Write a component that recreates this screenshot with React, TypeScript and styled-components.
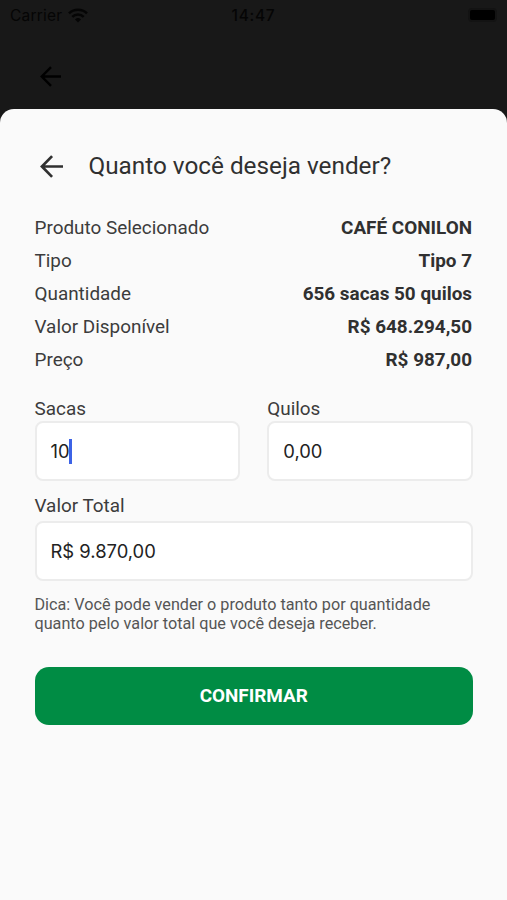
import React from "react";
import styled, { createGlobalStyle } from "styled-components";

const GlobalStyle = createGlobalStyle`
  * { box-sizing: border-box; }
  body { margin: 0; background: #181818; }
`;

const Screen = styled.div`
  display: flex;
  flex-direction: column;
  width: 507px;
  height: 900px;
  overflow: hidden;
  background: #181818;
  font-family: Roboto, "Liberation Sans", sans-serif;
  color: #303030;
`;

const Backdrop = styled.div`
  height: 109px;
  flex: none;
  color: #000;
`;

const StatusBar = styled.div`
  display: grid;
  grid-template-columns: 1fr auto 1fr;
  align-items: center;
  height: 30px;
  padding: 0 10px 0 10px;
  font-family: Inter, sans-serif;
  font-size: 15.5px;
  color: #050505;
`;

const Carrier = styled.div`
  display: flex;
  align-items: center;
  gap: 6px;
  letter-spacing: 0.2px;
`;

const Clock = styled.div`
  font-weight: 500;
  font-size: 15.5px;
  letter-spacing: 0.7px;
`;

const Battery = styled.div`
  justify-self: end;
  width: 29px;
  height: 14px;
  padding: 2px;
  border-radius: 4px;
  background: #131313;

  &::after {
    content: "";
    display: block;
    height: 10px;
    border-radius: 2px;
    background: #000;
  }
`;

const BackdropNav = styled.div`
  display: flex;
  padding: 36px 0 0 40px;
`;

const Sheet = styled.main`
  flex: 1;
  padding: 37px 35px 0 34.5px;
  border-radius: 14px 14px 0 0;
  background: #fafafa;
`;

const Header = styled.header`
  display: flex;
  align-items: center;
  height: 40px;
  padding-left: 5.5px;
  gap: 25.5px;
`;

const Title = styled.h1`
  margin: 0;
  font-size: 24.3px;
  font-weight: 400;
  line-height: 40px;
  white-space: nowrap;
`;

const Details = styled.dl`
  margin: 25px 0 0;
`;

const DetailRow = styled.div`
  display: flex;
  justify-content: space-between;
  height: 33px;
  font-size: 18.9px;
  line-height: 33px;
`;

const Term = styled.dt`
  color: #3c3c3c;
`;

const Value = styled.dd`
  margin: 0;
  font-weight: 700;
`;

const FieldRow = styled.div`
  display: grid;
  grid-template-columns: 1fr 1fr;
  gap: 27px;
  margin-top: 21px;
  margin-right: -1px;
`;

const FieldBlock = styled.div<{ $gap?: number }>`
  display: flex;
  flex-direction: column;
  gap: ${(p) => p.$gap ?? 0}px;
`;

const FieldLabel = styled.div`
  font-size: 18.9px;
  line-height: 24px;
  color: #3c3c3c;
`;

const FieldBox = styled.div`
  display: flex;
  align-items: center;
  height: 60px;
  padding: 0 14px;
  border: 2px solid #ececec;
  border-radius: 8px;
  background: #fff;
  font-family: Inter, sans-serif;
  font-size: 18.4px;
  color: #222;
`;

const Caret = styled.span`
  width: 2.5px;
  height: 25px;
  margin-left: -0.5px;
  background: #3c63e6;
`;

const TotalField = styled(FieldBlock)`
  margin-top: 13px;
  margin-right: -1px;
`;

const Hint = styled.p`
  margin: 14px 0 0;
  font-size: 16.2px;
  line-height: 19px;
  color: #555;
  white-space: nowrap;
`;

const ConfirmButton = styled.button`
  display: block;
  width: calc(100% + 1px);
  height: 58px;
  margin-top: 33.5px;
  padding: 0;
  border: 0;
  border-radius: 14px;
  background: #008c44;
  color: #fff;
  font-family: inherit;
  font-size: 18.9px;
  font-weight: 700;
`;

const BackArrow = ({ size }: { size: number }) => (
  <svg width={size} height={size} viewBox="0 0 24 24" fill="none" stroke="currentColor" strokeWidth="2.8">
    <path d="M24 12H2.2M12.6 1.2 2 12l10.6 10.8" />
  </svg>
);

const Wifi = () => (
  <svg width="20" height="15" viewBox="0 0 20 15" fill="none" stroke="currentColor" strokeWidth="2.5">
    <path d="M1 5.4a13 13 0 0 1 18 0M4.3 8.8a8.2 8.2 0 0 1 11.4 0" />
    <path d="M10 14.5 7 11.4a4.4 4.4 0 0 1 6 0z" fill="currentColor" stroke="none" />
  </svg>
);

const details = [
  ["Produto Selecionado", "CAFÉ CONILON"],
  ["Tipo", "Tipo 7"],
  ["Quantidade", "656 sacas 50 quilos"],
  ["Valor Disponível", "R$ 648.294,50"],
  ["Preço", "R$ 987,00"],
];

export default function App() {
  return (
    <Screen>
      <GlobalStyle />
      <Backdrop>
        <StatusBar>
          <Carrier>
            Carrier
            <Wifi />
          </Carrier>
          <Clock>14:47</Clock>
          <Battery />
        </StatusBar>
        <BackdropNav>
          <BackArrow size={21} />
        </BackdropNav>
      </Backdrop>
      <Sheet>
        <Header>
          <BackArrow size={23} />
          <Title>Quanto você deseja vender?</Title>
        </Header>
        <Details>
          {details.map(([term, value]) => (
            <DetailRow key={term}>
              <Term>{term}</Term>
              <Value>{value}</Value>
            </DetailRow>
          ))}
        </Details>
        <FieldRow>
          <FieldBlock>
            <FieldLabel>Sacas</FieldLabel>
            <FieldBox>
              10
              <Caret />
            </FieldBox>
          </FieldBlock>
          <FieldBlock>
            <FieldLabel>Quilos</FieldLabel>
            <FieldBox>0,00</FieldBox>
          </FieldBlock>
        </FieldRow>
        <TotalField $gap={3}>
          <FieldLabel>Valor Total</FieldLabel>
          <FieldBox>R$ 9.870,00</FieldBox>
        </TotalField>
        <Hint>
          Dica: Você pode vender o produto tanto por quantidade
          <br />
          quanto pelo valor total que você deseja receber.
        </Hint>
        <ConfirmButton type="button">CONFIRMAR</ConfirmButton>
      </Sheet>
    </Screen>
  );
}
